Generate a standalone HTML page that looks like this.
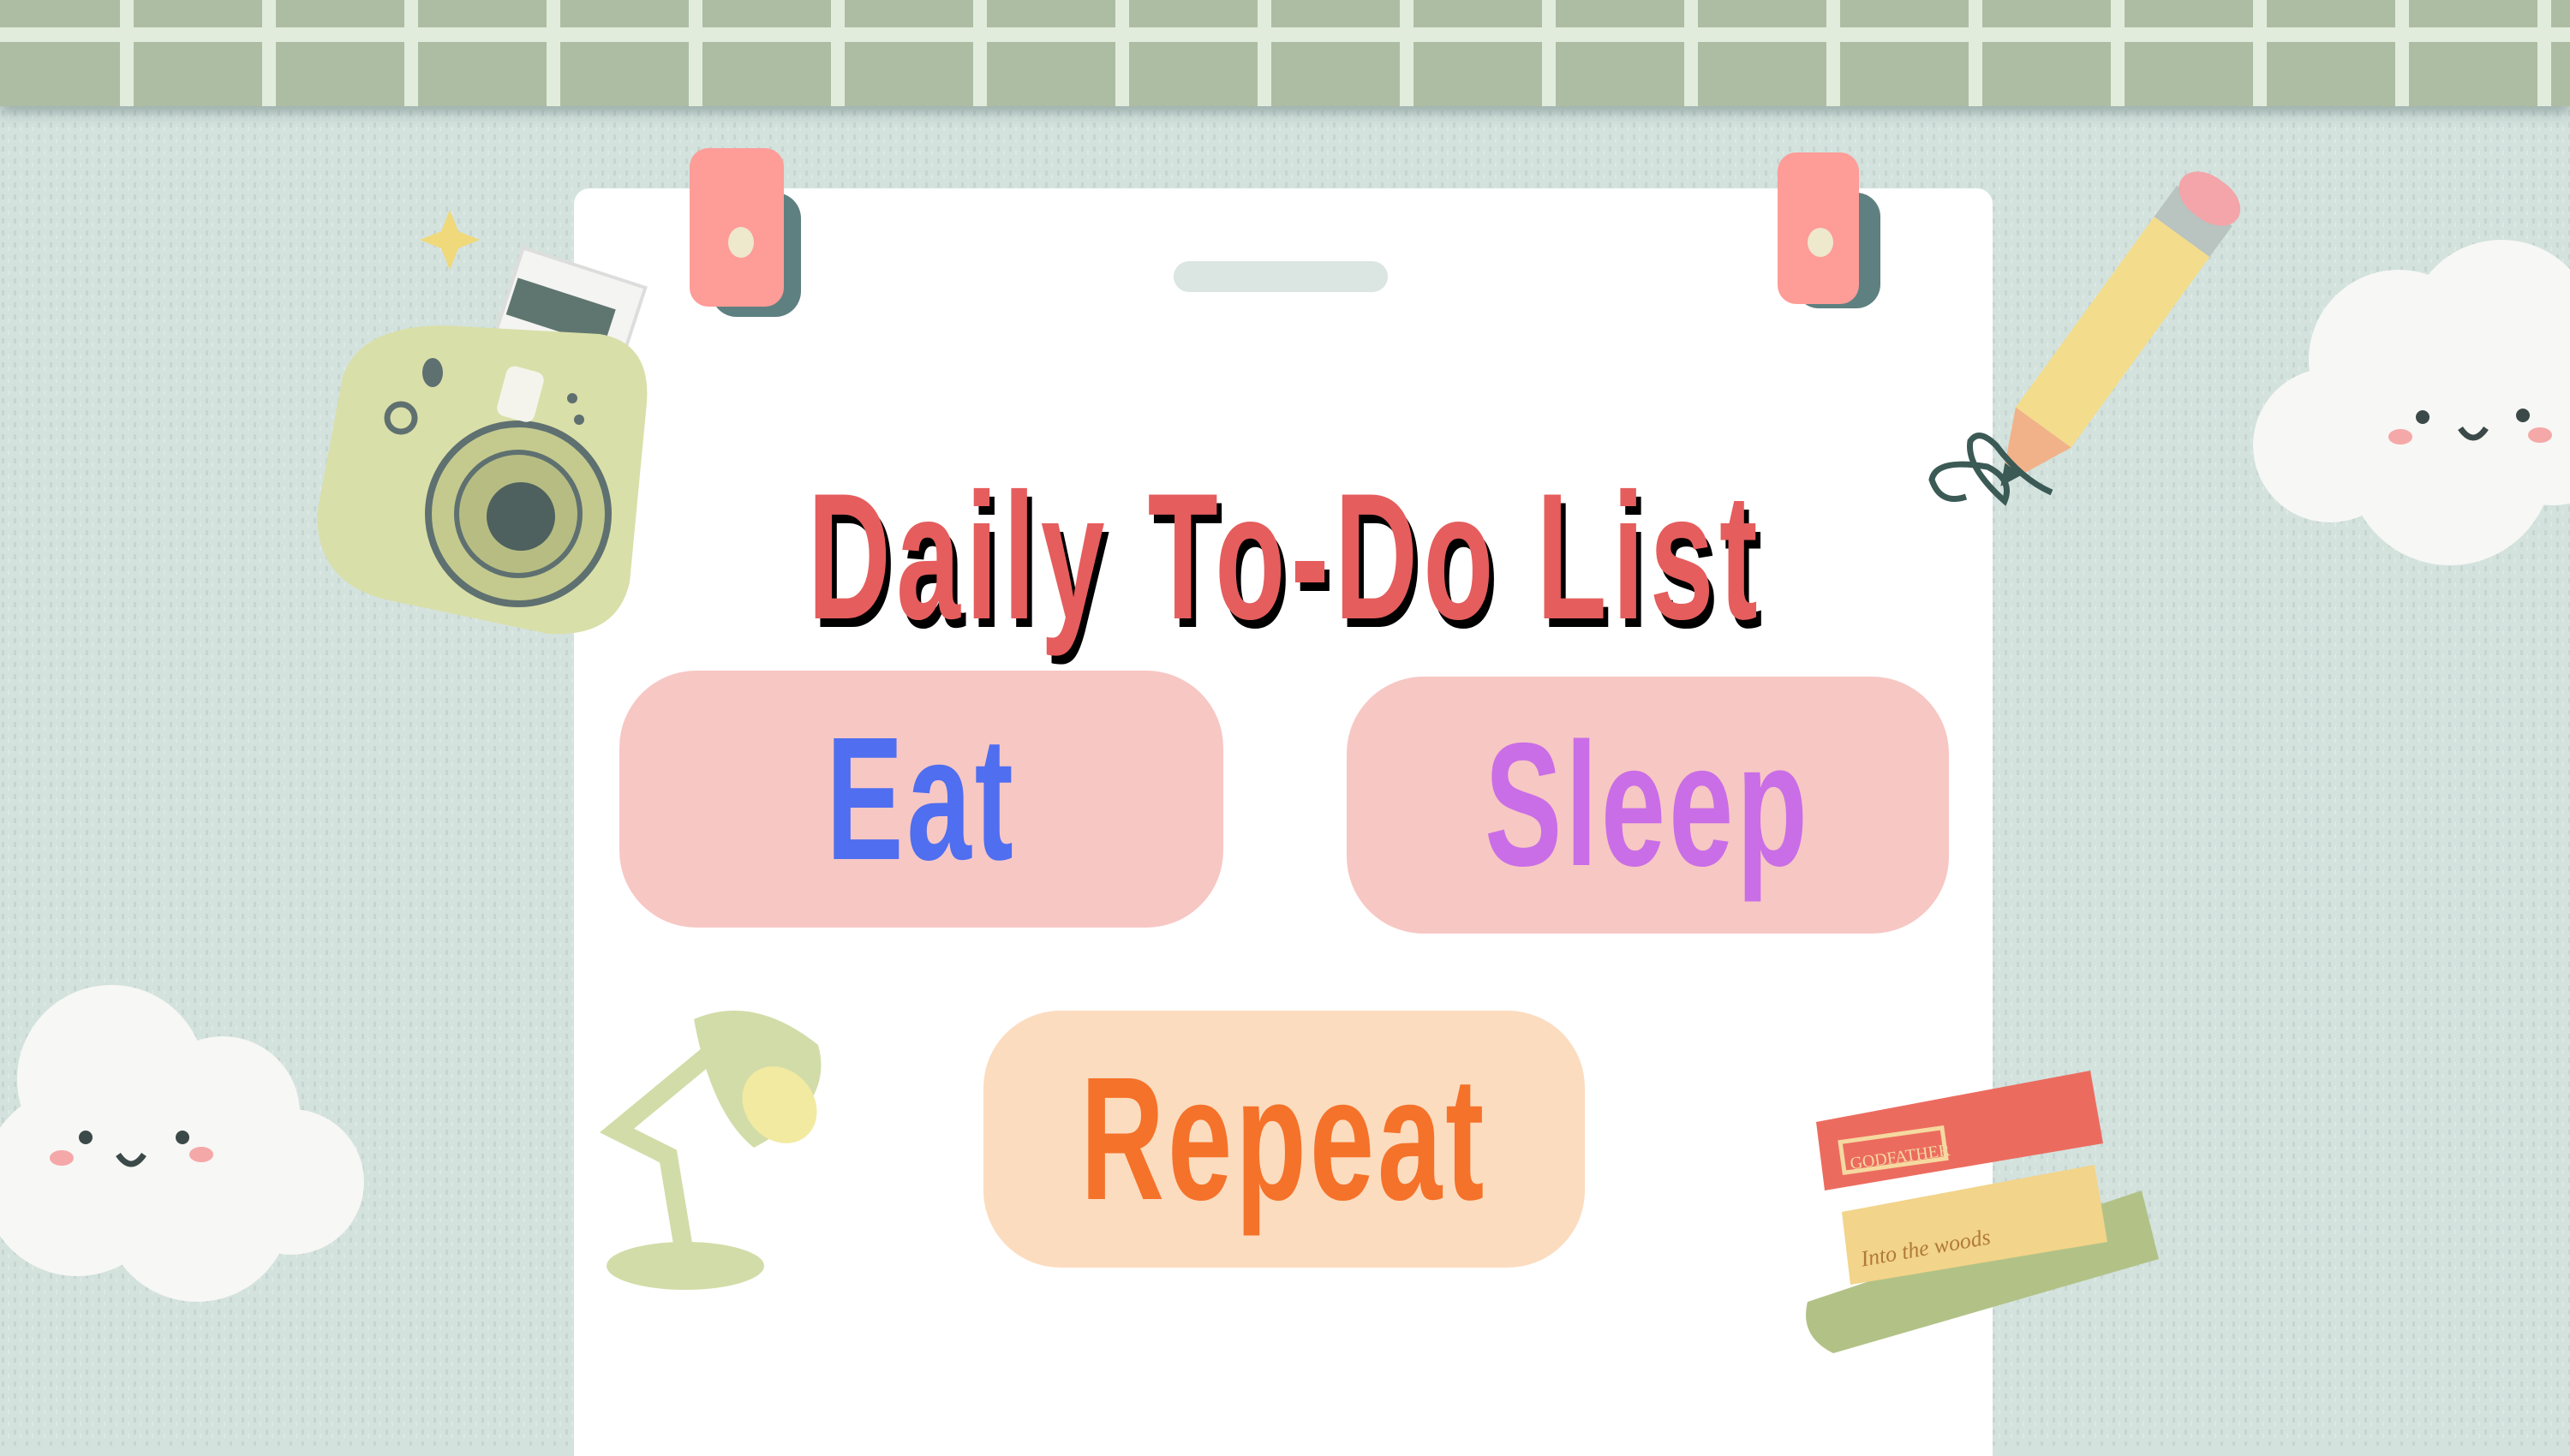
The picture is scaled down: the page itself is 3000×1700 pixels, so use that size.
<!DOCTYPE html>
<html><head><meta charset="utf-8">
<style>
html,body{margin:0;padding:0}
body{width:3000px;height:1688px;overflow:hidden;position:relative;background:#d3e2dd;font-family:"Liberation Sans",sans-serif}
.abs{position:absolute}
.band{left:0;top:0;width:3000px;height:124px;background:#adbda3;box-shadow:0 8px 14px rgba(90,110,110,.45)}
.vl{position:absolute;top:0;width:16px;height:124px;background:#e2ecdc}
.hl{position:absolute;left:0;top:32px;width:3000px;height:17px;background:#e2ecdc}
.paper{left:670px;top:220px;width:1656px;height:1480px;background:#fff;border-radius:18px 18px 0 0}
.box{position:absolute;border-radius:90px;display:flex;align-items:center;justify-content:center}
.word{font-weight:bold;display:inline-block;transform:scaleX(.72);letter-spacing:6px;white-space:nowrap}
.title{left:700px;top:545px;width:1600px;display:flex;justify-content:center;color:#e55d5d;font-size:210px;font-weight:bold;line-height:1;text-shadow:9px 10px 0 #000;white-space:nowrap}
</style></head><body>
<svg class="abs" style="left:0;top:0" width="3000" height="1688">
<defs><pattern id="n" width="14" height="14" patternUnits="userSpaceOnUse">
<rect width="14" height="14" fill="#d3e2dd"/><rect x="2" y="3" width="3" height="6" fill="#c6d5d1"/><rect x="9" y="8" width="2" height="5" fill="#dde9e6"/></pattern></defs>
<rect width="3000" height="1688" fill="url(#n)"/>
</svg>
<div class="abs band">
<div class="hl"></div>
<div class="vl" style="left:140px"></div><div class="vl" style="left:306px"></div><div class="vl" style="left:472px"></div><div class="vl" style="left:638px"></div><div class="vl" style="left:804px"></div><div class="vl" style="left:970px"></div><div class="vl" style="left:1136px"></div><div class="vl" style="left:1302px"></div><div class="vl" style="left:1468px"></div><div class="vl" style="left:1634px"></div><div class="vl" style="left:1800px"></div><div class="vl" style="left:1966px"></div><div class="vl" style="left:2132px"></div><div class="vl" style="left:2298px"></div><div class="vl" style="left:2464px"></div><div class="vl" style="left:2630px"></div><div class="vl" style="left:2796px"></div><div class="vl" style="left:2962px"></div>
</div>
<div class="abs paper"></div>
<svg class="abs" style="left:0;top:0" width="3000" height="1688">
<rect x="830" y="225" width="105" height="145" rx="30" fill="#5e8080"/>
<rect x="805" y="173" width="110" height="185" rx="22" fill="#fe9c98"/>
<ellipse cx="865" cy="283" rx="15" ry="18" fill="#eee8cc"/>
<rect x="2095" y="225" width="100" height="135" rx="28" fill="#5e8080"/>
<rect x="2075" y="178" width="95" height="177" rx="22" fill="#fe9c98"/>
<ellipse cx="2125" cy="283" rx="15" ry="17" fill="#eee8cc"/>
<rect x="1370" y="305" width="250" height="36" rx="18" fill="#dbe5e2"/>
<path d="M515 270 l10 -25 l10 25 l25 10 l-25 10 l-10 25 l-10 -25 l-25 -10z" fill="#f0d97a"/>
<rect x="590" y="310" width="150" height="110" transform="rotate(18 665 365)" fill="#f4f4f2" stroke="#ddd" stroke-width="4"/>
<rect x="595" y="345" width="120" height="45" transform="rotate(18 665 365)" fill="#5f7670"/>
<path d="M400 440 Q420 380 520 380 L700 390 Q760 400 755 470 L735 680 Q720 745 640 740 L450 700 Q370 680 370 600z" fill="#d9dfa8"/>
<circle cx="605" cy="600" r="105" fill="#c4c98e" stroke="#5e7070" stroke-width="8"/>
<circle cx="605" cy="600" r="72" fill="#b7bd82" stroke="#5e7070" stroke-width="6"/>
<circle cx="608" cy="603" r="40" fill="#4e615f"/>
<circle cx="468" cy="488" r="16" fill="none" stroke="#5e7070" stroke-width="7"/>
<ellipse cx="505" cy="435" rx="12" ry="17" fill="#5e7070"/>
<rect x="585" y="430" width="45" height="60" rx="10" fill="#f4f4ec" transform="rotate(15 607 460)"/>
<circle cx="668" cy="465" r="6" fill="#5e7070"/><circle cx="676" cy="490" r="6" fill="#5e7070"/>
<g transform="rotate(36 2450 410)">
<rect x="2410" y="230" width="80" height="290" fill="#f3dd8c"/>
<rect x="2410" y="200" width="80" height="45" fill="#b9c3c0"/>
<rect x="2410" y="165" width="80" height="50" rx="36" fill="#f3a5a9"/>
<path d="M2410 520 L2450 605 L2490 520z" fill="#f1b28a"/>
<path d="M2438 580 L2450 605 L2462 580z" fill="#3b5a55"/>
</g>
<path d="M2395 575 Q2360 560 2330 520 Q2310 500 2300 515 Q2295 545 2340 585 Q2350 560 2320 545 Q2260 535 2255 560 Q2265 590 2295 580" fill="none" stroke="#3b5a55" stroke-width="7"/>
<g fill="#f7f7f5">
<circle cx="2800" cy="420" r="105"/><circle cx="2920" cy="390" r="110"/><circle cx="2720" cy="520" r="90"/><circle cx="2860" cy="540" r="120"/><circle cx="2980" cy="500" r="90"/>
<circle cx="130" cy="1260" r="110"/><circle cx="260" cy="1300" r="90"/><circle cx="90" cy="1380" r="110"/><circle cx="230" cy="1410" r="110"/><circle cx="340" cy="1380" r="85"/>
</g>
<circle cx="2828" cy="487" r="8" fill="#3b4a48"/><circle cx="2945" cy="485" r="8" fill="#3b4a48"/>
<path d="M2872 500 q15 22 30 0" stroke="#3b4a48" stroke-width="7" fill="none"/>
<ellipse cx="2802" cy="510" rx="14" ry="9" fill="#f5a8a8"/><ellipse cx="2965" cy="508" rx="14" ry="9" fill="#f5a8a8"/>
<circle cx="100" cy="1328" r="8" fill="#3b4a48"/><circle cx="213" cy="1328" r="8" fill="#3b4a48"/>
<path d="M138 1348 q15 22 30 0" stroke="#3b4a48" stroke-width="7" fill="none"/>
<ellipse cx="72" cy="1352" rx="14" ry="9" fill="#f5a8a8"/><ellipse cx="235" cy="1348" rx="14" ry="9" fill="#f5a8a8"/>
<ellipse cx="800" cy="1478" rx="92" ry="28" fill="#d2dca8"/>
<path d="M800 1470 L780 1350 L720 1320 L835 1225" fill="none" stroke="#d2dca8" stroke-width="22" stroke-linecap="round"/>
<path d="M810 1190 Q880 1160 955 1220 Q975 1290 880 1340 Q830 1300 810 1190z" fill="#d2dca8"/>
<ellipse cx="910" cy="1290" rx="40" ry="48" fill="#f2eaa0" transform="rotate(-40 910 1290)"/>
<path d="M2110 1520 L2500 1390 L2520 1470 L2140 1580 Q2100 1560 2110 1520z" fill="#b2c287"/>
<path d="M2150 1415 L2445 1360 L2460 1450 L2160 1500z" fill="#f2d48a"/>
<path d="M2120 1310 L2440 1250 L2455 1335 L2130 1390z" fill="#ec6b5f"/>
<rect x="2150" y="1325" width="120" height="36" fill="none" stroke="#f5d9a0" stroke-width="5" transform="rotate(-8 2210 1343)"/>
<text x="2158" y="1358" font-size="20" font-family="Liberation Serif" fill="#f5d9a0" transform="rotate(-8 2210 1343)">GODFATHER</text>
<text x="2170" y="1465" font-size="26" font-style="italic" font-family="Liberation Serif" fill="#b07a3a" transform="rotate(-10 2250 1450)">Into the woods</text>
</svg>
<div class="abs title"><span class="word" style="transform:scaleX(.64);letter-spacing:10px">Daily To-Do List</span></div>
<div class="box" style="left:723px;top:783px;width:705px;height:300px;background:#f7c7c4"><span class="word" style="font-size:205px;color:#4f6ef0;transform:scaleX(.66)">Eat</span></div>
<div class="box" style="left:1572px;top:790px;width:703px;height:300px;background:#f7c7c4"><span class="word" style="font-size:205px;color:#c96ee6;transform:scaleX(.66)">Sleep</span></div>
<div class="box" style="left:1148px;top:1180px;width:702px;height:300px;background:#fcdcbf"><span class="word" style="font-size:205px;color:#f5722a;transform:scaleX(.66)">Repeat</span></div>
</body></html>
